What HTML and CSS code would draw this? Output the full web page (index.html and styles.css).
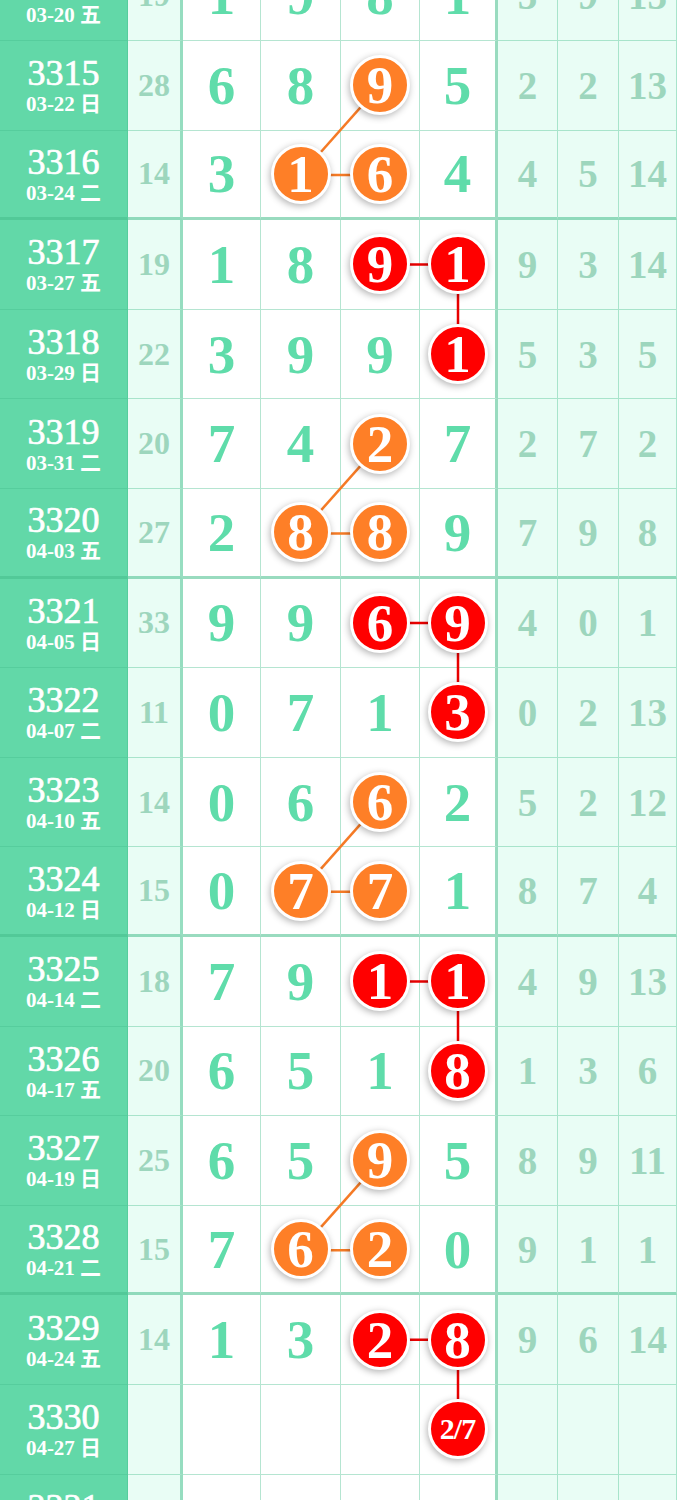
FILE: index.html
```html
<!DOCTYPE html>
<html lang="zh">
<head>
    <meta charset="UTF-8">
    <meta name="viewport" content="width=device-width, initial-scale=1.0">
    <title>走势图</title>
    <link rel="stylesheet" href="styles.css">
</head>
<body>

<div class="chart">

    <!-- connecting lines, drawn under the balls -->
    <svg class="links" width="677" height="1620" viewBox="0 0 677 1620">
        <g stroke="#f57a25" stroke-width="2.5">
            <line x1="380" y1="134.4" x2="300.5" y2="224"/>
            <line x1="300.5" y1="224" x2="380" y2="224"/>
            <line x1="380" y1="492.8" x2="300.5" y2="582.4"/>
            <line x1="300.5" y1="582.4" x2="380" y2="582.4"/>
            <line x1="380" y1="851.2" x2="300.5" y2="940.8"/>
            <line x1="300.5" y1="940.8" x2="380" y2="940.8"/>
            <line x1="380" y1="1209.6" x2="300.5" y2="1299.2"/>
            <line x1="300.5" y1="1299.2" x2="380" y2="1299.2"/>
        </g>
        <g stroke="#e80000" stroke-width="2.5">
            <line x1="380" y1="313.6" x2="458" y2="313.6"/>
            <line x1="458" y1="313.6" x2="458" y2="403.2"/>
            <line x1="380" y1="672" x2="458" y2="672"/>
            <line x1="458" y1="672" x2="458" y2="761.6"/>
            <line x1="380" y1="1030.4" x2="458" y2="1030.4"/>
            <line x1="458" y1="1030.4" x2="458" y2="1120"/>
            <line x1="380" y1="1388.8" x2="458" y2="1388.8"/>
            <line x1="458" y1="1388.8" x2="458" y2="1478.4"/>
        </g>
    </svg>

    <div class="row">
        <div class="c-id"><b>3314</b><small>03-20 五</small></div>
        <div class="c-sum">19</div>
        <div class="c-d">1</div><div class="c-d">9</div><div class="c-d">8</div><div class="c-d">1</div>
        <div class="c-x">3</div><div class="c-x">9</div><div class="c-x">13</div>
    </div>
    <div class="row">
        <div class="c-id"><b>3315</b><small>03-22 日</small></div>
        <div class="c-sum">28</div>
        <div class="c-d">6</div><div class="c-d">8</div><div class="c-d"><span class="ball o">9</span></div><div class="c-d">5</div>
        <div class="c-x">2</div><div class="c-x">2</div><div class="c-x">13</div>
    </div>
    <div class="row end">
        <div class="c-id"><b>3316</b><small>03-24 二</small></div>
        <div class="c-sum">14</div>
        <div class="c-d">3</div><div class="c-d"><span class="ball o">1</span></div><div class="c-d"><span class="ball o">6</span></div><div class="c-d">4</div>
        <div class="c-x">4</div><div class="c-x">5</div><div class="c-x">14</div>
    </div>
    <div class="row">
        <div class="c-id"><b>3317</b><small>03-27 五</small></div>
        <div class="c-sum">19</div>
        <div class="c-d">1</div><div class="c-d">8</div><div class="c-d"><span class="ball r">9</span></div><div class="c-d"><span class="ball r">1</span></div>
        <div class="c-x">9</div><div class="c-x">3</div><div class="c-x">14</div>
    </div>
    <div class="row">
        <div class="c-id"><b>3318</b><small>03-29 日</small></div>
        <div class="c-sum">22</div>
        <div class="c-d">3</div><div class="c-d">9</div><div class="c-d">9</div><div class="c-d"><span class="ball r">1</span></div>
        <div class="c-x">5</div><div class="c-x">3</div><div class="c-x">5</div>
    </div>
    <div class="row">
        <div class="c-id"><b>3319</b><small>03-31 二</small></div>
        <div class="c-sum">20</div>
        <div class="c-d">7</div><div class="c-d">4</div><div class="c-d"><span class="ball o">2</span></div><div class="c-d">7</div>
        <div class="c-x">2</div><div class="c-x">7</div><div class="c-x">2</div>
    </div>
    <div class="row end">
        <div class="c-id"><b>3320</b><small>04-03 五</small></div>
        <div class="c-sum">27</div>
        <div class="c-d">2</div><div class="c-d"><span class="ball o">8</span></div><div class="c-d"><span class="ball o">8</span></div><div class="c-d">9</div>
        <div class="c-x">7</div><div class="c-x">9</div><div class="c-x">8</div>
    </div>
    <div class="row">
        <div class="c-id"><b>3321</b><small>04-05 日</small></div>
        <div class="c-sum">33</div>
        <div class="c-d">9</div><div class="c-d">9</div><div class="c-d"><span class="ball r">6</span></div><div class="c-d"><span class="ball r">9</span></div>
        <div class="c-x">4</div><div class="c-x">0</div><div class="c-x">1</div>
    </div>
    <div class="row">
        <div class="c-id"><b>3322</b><small>04-07 二</small></div>
        <div class="c-sum">11</div>
        <div class="c-d">0</div><div class="c-d">7</div><div class="c-d">1</div><div class="c-d"><span class="ball r">3</span></div>
        <div class="c-x">0</div><div class="c-x">2</div><div class="c-x">13</div>
    </div>
    <div class="row">
        <div class="c-id"><b>3323</b><small>04-10 五</small></div>
        <div class="c-sum">14</div>
        <div class="c-d">0</div><div class="c-d">6</div><div class="c-d"><span class="ball o">6</span></div><div class="c-d">2</div>
        <div class="c-x">5</div><div class="c-x">2</div><div class="c-x">12</div>
    </div>
    <div class="row end">
        <div class="c-id"><b>3324</b><small>04-12 日</small></div>
        <div class="c-sum">15</div>
        <div class="c-d">0</div><div class="c-d"><span class="ball o">7</span></div><div class="c-d"><span class="ball o">7</span></div><div class="c-d">1</div>
        <div class="c-x">8</div><div class="c-x">7</div><div class="c-x">4</div>
    </div>
    <div class="row">
        <div class="c-id"><b>3325</b><small>04-14 二</small></div>
        <div class="c-sum">18</div>
        <div class="c-d">7</div><div class="c-d">9</div><div class="c-d"><span class="ball r">1</span></div><div class="c-d"><span class="ball r">1</span></div>
        <div class="c-x">4</div><div class="c-x">9</div><div class="c-x">13</div>
    </div>
    <div class="row">
        <div class="c-id"><b>3326</b><small>04-17 五</small></div>
        <div class="c-sum">20</div>
        <div class="c-d">6</div><div class="c-d">5</div><div class="c-d">1</div><div class="c-d"><span class="ball r">8</span></div>
        <div class="c-x">1</div><div class="c-x">3</div><div class="c-x">6</div>
    </div>
    <div class="row">
        <div class="c-id"><b>3327</b><small>04-19 日</small></div>
        <div class="c-sum">25</div>
        <div class="c-d">6</div><div class="c-d">5</div><div class="c-d"><span class="ball o">9</span></div><div class="c-d">5</div>
        <div class="c-x">8</div><div class="c-x">9</div><div class="c-x">11</div>
    </div>
    <div class="row end">
        <div class="c-id"><b>3328</b><small>04-21 二</small></div>
        <div class="c-sum">15</div>
        <div class="c-d">7</div><div class="c-d"><span class="ball o">6</span></div><div class="c-d"><span class="ball o">2</span></div><div class="c-d">0</div>
        <div class="c-x">9</div><div class="c-x">1</div><div class="c-x">1</div>
    </div>
    <div class="row">
        <div class="c-id"><b>3329</b><small>04-24 五</small></div>
        <div class="c-sum">14</div>
        <div class="c-d">1</div><div class="c-d">3</div><div class="c-d"><span class="ball r">2</span></div><div class="c-d"><span class="ball r">8</span></div>
        <div class="c-x">9</div><div class="c-x">6</div><div class="c-x">14</div>
    </div>
    <div class="row">
        <div class="c-id"><b>3330</b><small>04-27 日</small></div>
        <div class="c-sum"></div>
        <div class="c-d"></div><div class="c-d"></div><div class="c-d"></div><div class="c-d"><span class="ball r small">2/7</span></div>
        <div class="c-x"></div><div class="c-x"></div><div class="c-x"></div>
    </div>
    <div class="row">
        <div class="c-id"><b>3331</b><small>04-29 二</small></div>
        <div class="c-sum"></div>
        <div class="c-d"></div><div class="c-d"></div><div class="c-d"></div><div class="c-d"></div>
        <div class="c-x"></div><div class="c-x"></div><div class="c-x"></div>
    </div>

</div>

</body>
</html>
```

FILE: styles.css
```css
html, body {
    margin: 0;
    height: 1500px;
    overflow: hidden;
    background-color: #fff;
}

.chart {
    position: relative;
    width: 677px;
    margin-top: -48.6px;
    font-family: "Liberation Serif", "Noto Sans CJK SC", serif;
    font-weight: bold;
}

.links {
    position: absolute;
    top: 0;
    left: 0;
    z-index: 1;
}

.row {
    display: grid;
    grid-template-columns: 128px 55px 78px 80px 79px 78px 60px 61px 58px;
    height: 89.6px;
}

.row > div {
    box-sizing: border-box;
    display: flex;
    align-items: center;
    justify-content: center;
    border-bottom: 1px solid rgba(70, 190, 140, 0.4);
    border-right: 1px solid rgba(70, 190, 140, 0.4);
}

.row.end > div {
    border-bottom: 3px solid rgba(70, 190, 140, 0.55);
}

.c-id {
    flex-direction: column;
    background-color: #62d8a8;
    color: #fff;
    line-height: 1;
}

.c-id b {
    font-weight: normal;
    font-size: 36px;
    -webkit-text-stroke: 0.7px #fff;
}

.c-id small {
    font-size: 21px;
    margin-top: 3px;
}

.c-sum {
    background-color: #e9fdf5;
    color: #9dd6bd;
    font-size: 32px;
    border-right: 3px solid rgba(70, 190, 140, 0.5) !important;
}

.c-d {
    color: #5fdcaa;
    font-size: 55px;
}

.row > .c-d:nth-child(6) {
    border-right: 3px solid rgba(70, 190, 140, 0.55);
}

.c-x {
    background-color: #e9fdf5;
    color: #9dd6bd;
    font-size: 39px;
}

.ball {
    position: relative;
    z-index: 2;
    width: 54px;
    height: 54px;
    border: 3px solid #fff;
    border-radius: 50%;
    display: flex;
    align-items: center;
    justify-content: center;
    color: #fff;
    font-size: 53px;
    box-shadow: -1px 2px 7px rgba(0, 0, 0, 0.3);
}

.ball.o {
    background-color: #fe7f27;
}

.ball.r {
    background-color: #f00;
}

.ball.small {
    font-size: 30px;
    letter-spacing: -1px;
}
```
